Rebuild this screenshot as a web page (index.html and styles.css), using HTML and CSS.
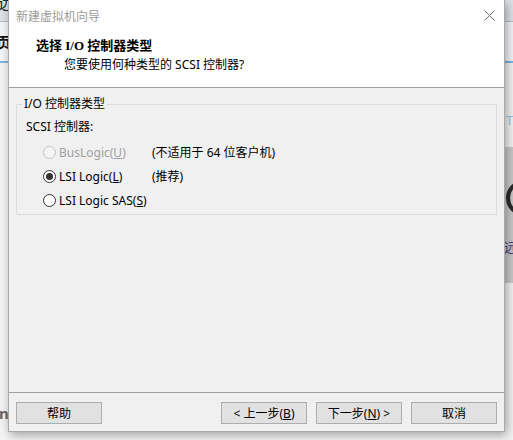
FILE: index.html
```html
<!DOCTYPE html>
<html>
<head>
	<meta charset="utf-8">
	<title>新建虚拟机向导</title>
	<link rel="stylesheet" href="styles.css">
</head>
<body>
	<div class="desktop">
		<!-- window behind the wizard, only its edges show -->
		<div class="back-window">
			<div class="back-top"><span class="back-glyph">远</span></div>
			<div class="back-tabs"><span class="back-glyph tab">页</span></div>
			<div class="back-rule"></div>
			<div class="back-body">
				<span class="back-t">T</span>
				<span class="back-n">n</span>
			</div>
			<div class="back-panel">
				<div class="back-ring"></div>
				<span class="back-caption">远</span>
			</div>
		</div>

		<div class="dialog">
			<div class="header">
				<div class="titlebar">
					<span class="title">新建虚拟机向导</span>
					<svg class="close" width="11" height="11" viewBox="0 0 11 11">
						<path d="M0.5 0.5L10.5 10.5M10.5 0.5L0.5 10.5" stroke="#6f6f6f" stroke-width="1" fill="none"/>
					</svg>
				</div>
				<div class="heading">选择 I/O 控制器类型</div>
				<div class="subheading">您要使用何种类型的 SCSI 控制器?</div>
			</div>

			<div class="content">
				<fieldset class="group">
					<legend>I/O 控制器类型</legend>
					<div class="group-label">SCSI 控制器:</div>
					<div class="options">
						<label class="option disabled"><span class="radio"></span>BusLogic(<u>U</u>)</label>
						<span class="note">(不适用于 64 位客户机)</span>
						<label class="option"><span class="radio checked"></span>LSI Logic(<u>L</u>)</label>
						<span class="note">(推荐)</span>
						<label class="option"><span class="radio"></span>LSI Logic SAS(<u>S</u>)</label>
						<span></span>
					</div>
				</fieldset>
			</div>

			<div class="footer">
				<button class="btn">帮助</button>
				<div class="nav">
					<button class="btn">&lt; 上一步(<u>B</u>)</button>
					<button class="btn">下一步(<u>N</u>) &gt;</button>
					<button class="btn">取消</button>
				</div>
			</div>
		</div>
	</div>
</body>
</html>
```

FILE: styles.css
```css
* {
  box-sizing: border-box;
}

body {
  margin: 0;
  font-family: "Noto Sans", "Noto Sans CJK SC", sans-serif;
  font-size: 12px;
  color: #000;
}

.desktop {
  position: relative;
  width: 513px;
  height: 440px;
  overflow: hidden;
  background: #f0f0f0;
}

/* background window */
.back-window {
  position: absolute;
  left: 0;
  top: 0;
  width: 513px;
  height: 440px;
  display: flex;
  flex-direction: column;
}

.back-top {
  height: 22px;
  background: #dfe3e9;
  border-bottom: 1px solid #b9bec6;
  overflow: hidden;
}

.back-glyph {
  display: block;
  font-family: "Noto Sans CJK SC", sans-serif;
  font-size: 16px;
  line-height: 16px;
  margin-top: -6px;
  margin-left: -2px;
  color: #222;
}

.back-glyph.tab {
  margin-top: 12px;
  margin-left: -4px;
  font-weight: bold;
  font-size: 15px;
  color: #111;
}

.back-tabs {
  height: 39px;
  background: #f5f6f8;
}

.back-rule {
  height: 2px;
  background: #7fb4de;
}

.back-body {
  flex: 1;
  background: #f4f4f4;
  position: relative;
}

.back-t {
  position: absolute;
  left: 506px;
  top: 48px;
  font-size: 13px;
  color: #8fc7e6;
}

.back-n {
  position: absolute;
  left: -1px;
  top: 340px;
  font-size: 15px;
  font-weight: bold;
  color: #666;
}

.back-panel {
  position: absolute;
  left: 480px;
  top: 147px;
  width: 40px;
  height: 136px;
  background: #c9c9c9;
}

.back-ring {
  position: absolute;
  left: 26px;
  top: 33px;
  width: 36px;
  height: 36px;
  border: 4px solid #2b2b2b;
  border-radius: 50%;
}

.back-caption {
  position: absolute;
  left: 24px;
  top: 90px;
  font-family: "Noto Sans CJK SC", sans-serif;
  font-size: 13px;
  color: #4a3a7a;
}

/* wizard dialog */
.dialog {
  position: absolute;
  left: 8px;
  top: 0;
  width: 497px;
  height: 432px;
  display: flex;
  flex-direction: column;
  background: #f0f0f0;
  border: 1px solid #a9a9a9;
  border-top: none;
  box-shadow: 2px 3px 10px rgba(0, 0, 0, 0.35);
}

.header {
  height: 88px;
  background: #fff;
  border-bottom: 1px solid #a0a0a0;
}

.titlebar {
  height: 30px;
  display: flex;
  align-items: center;
  justify-content: space-between;
  padding: 0 9px 0 7px;
}

.title {
  font-family: "Noto Sans CJK SC", sans-serif;
  color: #9b9b9b;
  font-size: 12px;
}

.heading {
  margin-top: 8px;
  padding-left: 27px;
  line-height: 16px;
  font-family: "Liberation Serif", "Noto Sans CJK SC", serif;
  font-weight: bold;
  font-size: 13px;
}

.subheading {
  margin-top: 3px;
  padding-left: 55px;
  line-height: 16px;
}

.content {
  height: 304px;
  padding-top: 9px;
}

.group {
  margin: 0 7px;
  padding: 9px 9px 1px 9px;
  border: 1px solid #dcdcdc;
  height: 118px;
}

.group legend {
  margin-left: -4px;
  padding: 0 2px;
  line-height: 14px;
}

.group-label {
  line-height: 14px;
}

.options {
  margin-top: 6px;
  margin-left: 17px;
  display: grid;
  grid-template-columns: 109px auto;
  grid-auto-rows: 24px;
  align-items: center;
}

.option {
  display: flex;
  align-items: center;
}

.option.disabled {
  color: #a0a0a0;
}

.radio {
  width: 13px;
  height: 13px;
  margin-right: 3px;
  border: 1px solid #333;
  border-radius: 50%;
  background: #fff;
  display: flex;
  align-items: center;
  justify-content: center;
}

.disabled .radio {
  border-color: #c4c4c4;
  background: #f4f4f4;
}

.radio.checked::after {
  content: "";
  width: 7px;
  height: 7px;
  border-radius: 50%;
  background: #333;
}

.footer {
  height: 39px;
  border-top: 1px solid #a0a0a0;
  display: flex;
  justify-content: space-between;
  padding: 9px 7px 0 7px;
}

.nav {
  display: flex;
  gap: 9px;
}

.btn {
  width: 86px;
  height: 22px;
  padding: 0;
  font-family: "Noto Sans", "Noto Sans CJK SC", sans-serif;
  font-size: 12px;
  color: #000;
  background: #e1e1e1;
  border: 1px solid #adadad;
  border-radius: 0;
}
```
